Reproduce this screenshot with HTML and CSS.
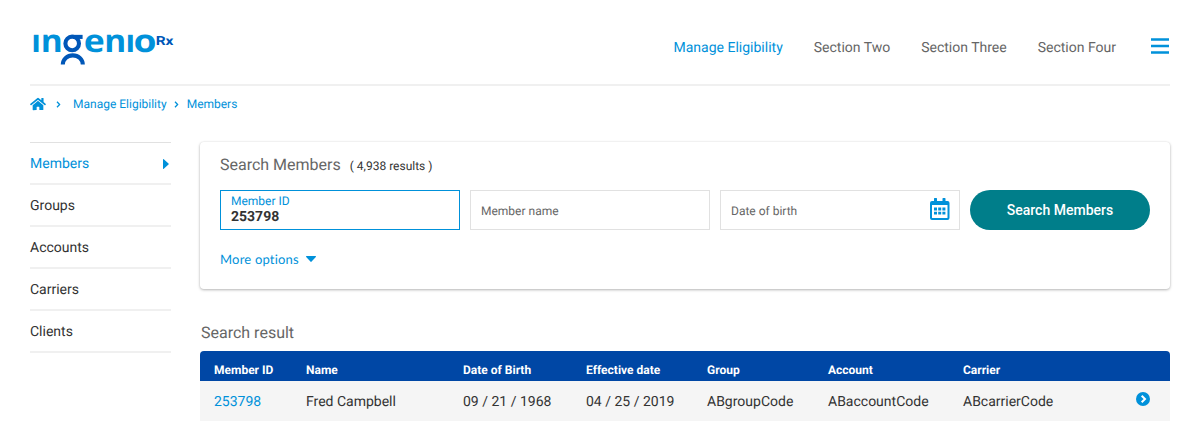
FILE: index.html
```html
<!DOCTYPE html>
<html lang="en">
<head>
<meta charset="utf-8">
<title>Manage Eligibility - Members</title>
<link rel="stylesheet" href="styles.css">
</head>
<body>
<div class="page">
  <header class="header">
    <a class="logo" aria-label="ingenioRx">
      <svg width="150" height="50" viewBox="26 17 150 50">
        <g class="wordmark">
          <text x="31.200" y="52">ı</text>
          <text x="40.700" y="52" textLength="22" lengthAdjust="spacingAndGlyphs">n</text>
          <text x="83.800" y="52" textLength="21" lengthAdjust="spacingAndGlyphs">e</text>
          <text x="104.300" y="52" textLength="22" lengthAdjust="spacingAndGlyphs">n</text>
          <text x="125.600" y="52">ı</text>
          <text x="133.500" y="52" textLength="23" lengthAdjust="spacingAndGlyphs">o</text>
        </g>
        <g class="emblem">
          <circle cx="72.2" cy="43.400" r="6.800"/>
          <path d="M73 36.900H82.600"/>
          <path d="M62.800 64.600a10 9.200 0 0 1 20 0"/>
        </g>
        <text class="rx" x="155.700" y="45.4" textLength="17.800" lengthAdjust="spacingAndGlyphs">Rx</text>
      </svg>
    </a>
    <nav class="topnav">
      <a class="active">Manage Eligibility</a>
      <a>Section Two</a>
      <a>Section Three</a>
      <a>Section Four</a>
      <svg class="menu" width="18" height="16" viewBox="0 0 18 16"><path d="M0 1.5h18M0 8h18M0 14.5h18"/></svg>
    </nav>
  </header>
  <div class="crumbs">
    <svg class="home" width="16" height="14" viewBox="0 0 576 512" preserveAspectRatio="none"><path d="M280.370 148.260L96 300.110V464a16 16 0 0 0 16 16l112-.3a16 16 0 0 0 16-16V368a16 16 0 0 1 16-16h64a16 16 0 0 1 16 16v95.600a16 16 0 0 0 16 16l112 .3a16 16 0 0 0 16-16V300L295.700 148.260a12.200 12.200 0 0 0-15.300 0zM571.600 251.470L488 182.560V44.050a12 12 0 0 0-12-12h-56a12 12 0 0 0-12 12v72.600l-89.500-73.700a48 48 0 0 0-61 0L4.340 251.470a12 12 0 0 0-1.600 16.900l25.500 31a12 12 0 0 0 16.900 1.600L280.400 107.200a12.200 12.200 0 0 1 15.300 0L530.900 301a12 12 0 0 0 16.900-1.600l25.500-31a12 12 0 0 0-1.700-16.900z"/></svg>
    <svg class="chev first" width="5" height="7" viewBox="0 0 5 7"><path d="M1 .8l2.600 2.700L1 6.200"/></svg>
    <a>Manage Eligibility</a>
    <svg class="chev" width="5" height="7" viewBox="0 0 5 7"><path d="M1 .8l2.600 2.700L1 6.200"/></svg>
    <a>Members</a>
  </div>
  <div class="columns">
    <nav class="sidenav">
      <a class="active">Members <svg width="6" height="10" viewBox="0 0 6 10"><path d="M0 .6Q0-.2.800.2L5.500 4.400Q6.200 5 5.500 5.600L.8 9.800Q0 10.200 0 9.400Z"/></svg></a>
      <a>Groups</a>
      <a>Accounts</a>
      <a>Carriers</a>
      <a>Clients</a>
    </nav>
    <main>
      <section class="card">
        <div class="card-head"><h2>Search Members</h2><span>( 4,938 results )</span></div>
        <div class="fields">
          <div class="field focused"><label>Member ID</label><b>253798</b></div>
          <div class="field">Member name</div>
          <div class="field date">Date of birth
            <svg width="20" height="22" viewBox="0 0 20 22"><path fill-rule="evenodd" d="M4 .6Q4 0 4.600 0H6.400Q7 0 7 .6V3H12.500V.6Q12.500 0 13.100 0H14.900Q15.500 0 15.500 .6V3H17.500Q19.500 3 19.500 5V20Q19.500 22 17.500 22H2Q0 22 0 20V5Q0 3 2 3H4ZM2 7V19.500Q2 20 2.500 20H17Q17.500 20 17.500 19.500V7Z"/><path d="M4 9.600h3v3H4zM8.200 9.600h3v3h-3zM12.400 9.600h3v3h-3zM4 13.800h3v2.800H4zM8.200 13.800h3v2.800h-3zM12.400 13.800h3v2.800h-3z"/></svg>
          </div>
          <button>Search Members</button>
        </div>
        <a class="more">More options <svg width="10" height="6" viewBox="0 0 10 6"><path d="M.5 0h9q.8.200.300.900L5.600 5.600Q5 6.200 4.400 5.600L.2.900Q-.3.200.5 0Z"/></svg></a>
      </section>
      <h2 class="result-title">Search result</h2>
      <div class="table">
        <div class="row head"><span>Member ID</span><span>Name</span><span>Date of Birth</span><span>Effective date</span><span>Group</span><span>Account</span><span>Carrier</span><span></span></div>
        <div class="row body"><a>253798</a><span>Fred Campbell</span><span>09 / 21 / 1968</span><span>04 / 25 / 2019</span><span>ABgroupCode</span><span>ABaccountCode</span><span>ABcarrierCode</span>
          <svg width="14" height="14" viewBox="0 0 14 14"><circle cx="7" cy="7" r="7"/><path d="M5.700 3.700L9 7l-3.300 3.300"/></svg>
        </div>
      </div>
    </main>
  </div>
</div>
</body>
</html>
```
FILE: styles.css
```css
* { box-sizing: border-box; }
body { margin: 0; background: #fff; color: #333; font: 14px/20px Roboto, sans-serif; text-rendering: geometricPrecision; }
.page { padding: 0 30px; height: 438px; overflow: hidden; }
svg { display: block; fill: #0091da; flex: none; overflow: visible; }
h2 { margin: 0; font-size: 16px; font-weight: 400; line-height: 20px; color: #666; }

.header { display: flex; justify-content: space-between; height: 86px; padding-top: 33px; border-bottom: 2px solid #f0f0f0; }
.logo { margin: -16px 0 0 -4px; }
.wordmark { font: 700 31.500px "Open Sans", sans-serif; fill: #0091da; }
.emblem { fill: none; stroke: #0057b8; stroke-width: 4.100; }
.rx { font: 700 12.500px Roboto, sans-serif; fill: #0057b8; }
.topnav { display: flex; padding: 5px 1px 0 0; gap: 31px; color: #666; }
.topnav .active { color: #0091da; }
.menu { margin: 0 0 0 4px; fill: none; stroke: #0091da; stroke-width: 2.400; }

.crumbs { display: flex; align-items: center; height: 36px; font-size: 12px; color: #0091da; }
.chev { margin: 0 8px 0 7px; fill: none; stroke: #0091da; stroke-width: 1.300; }
.chev.first { margin: 0 12px 0 10px; }

.columns { display: flex; gap: 29px; padding-top: 19px; }
.sidenav { width: 141px; margin-top: 1px; border-top: 1px solid #e1e1e1; }
.sidenav a { display: flex; align-items: center; justify-content: space-between; height: 42px; padding: 2px 2px 0 0; border-bottom: 2px solid #f0f0f0; }
.sidenav .active { color: #0091da; }

main { width: 970px; }
.card { height: 147px; margin-top: 1px; padding: 13px 20px 0; border-radius: 4px; box-shadow: 0 1px 3px rgba(0,0,0,.28), 0 0 2px rgba(0,0,0,.08); }
.card-head { display: flex; gap: 9px; }
.card-head span { font-size: 12px; line-height: 23px; }
.fields { display: flex; gap: 10px; margin-top: 12px; }
.field { display: flex; align-items: center; justify-content: space-between; width: 240px; height: 40px; padding: 2px 10px 0; border: 1px solid #e1e1e1; color: #666; font-size: 12px; }
.field.focused { flex-direction: column; align-items: flex-start; justify-content: flex-start; border-color: #0091da; }
.field label { color: #0091da; line-height: 16px; }
.field b { color: #333; font-size: 14px; line-height: 17px; }
.field.date { padding-right: 9px; }
.field.date svg { margin-top: -4px; }
button { width: 180px; height: 40px; padding: 0; border: 0; border-radius: 20px; background: #007e8a; color: #fff; font: 500 14px Roboto, sans-serif; letter-spacing: .02px; }
.more { display: flex; align-items: center; gap: 7px; margin-top: 19px; color: #0091da; font: 13px/20px Lato, sans-serif; letter-spacing: .2px; }
.result-title { margin: 34px 0 8px 1px; }

.row { display: grid; grid-template-columns: 92px 157px 123px 121px 121px 135px 173px 14px; padding: 0 14px; align-items: center; }
.head { height: 30px; padding-top: 8px; border-radius: 4px 4px 0 0; background: #0047a5; color: #fff; font-size: 12px; font-weight: 700; }
.body { height: 40px; padding-top: 2px; background: #f5f5f5; }
.body a { color: #0091da; }
.body svg { margin-top: -6px; }
.body svg path { fill: none; stroke: #fff; stroke-width: 2; }
```
